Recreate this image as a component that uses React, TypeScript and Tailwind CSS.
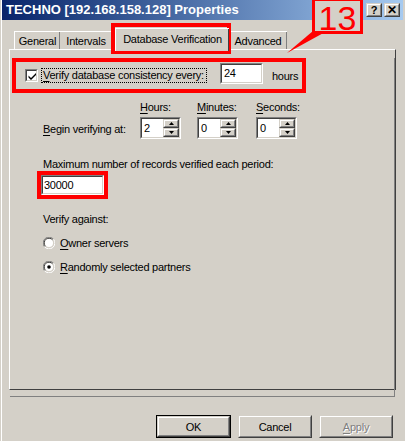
import React from "react";

const Sunken = ({ className = "", children }: { className?: string; children?: React.ReactNode }) => (
  <div className={"border border-t-[#808080] border-l-[#808080] border-b-white border-r-white " + className}>
    <div className="h-full w-full border border-t-[#404040] border-l-[#404040] border-b-[#d4d0c8] border-r-[#d4d0c8] bg-white">
      {children}
    </div>
  </div>
);

const Raised = ({ className = "", children }: { className?: string; children?: React.ReactNode }) => (
  <div className={"border border-t-[#d4d0c8] border-l-[#d4d0c8] border-b-[#404040] border-r-[#404040] " + className}>
    <div className="flex h-full w-full items-center justify-center border border-t-white border-l-white border-b-[#808080] border-r-[#808080] bg-[#d4d0c8]">
      {children}
    </div>
  </div>
);

const Arrow = ({ up }: { up?: boolean }) => (
  <svg width="5" height="3" viewBox="0 0 5 3">
    {up ? <polygon points="2.5,0 5,3 0,3" fill="#000" /> : <polygon points="0,0 5,0 2.5,3" fill="#000" />}
  </svg>
);

const Spinner = ({ value }: { value: string }) => (
  <Sunken className="h-[22px] w-[41px]">
    <div className="flex h-full">
      <div className="flex-1 pl-[2px] pt-[2px]">{value}</div>
      <div className="flex w-[16px] flex-col">
        <Raised className="h-[9px] w-full">
          <Arrow up />
        </Raised>
        <Raised className="h-[9px] w-full">
          <Arrow />
        </Raised>
      </div>
    </div>
  </Sunken>
);

const Radio = ({ checked }: { checked?: boolean }) => (
  <svg width="12" height="12" viewBox="0 0 12 12">
    <path d="M10.5 2.2 A5.6 5.6 0 0 0 1.5 9.8" stroke="#808080" strokeWidth="1" fill="none" />
    <path d="M9.5 2.8 A4.6 4.6 0 0 0 2.4 9.2" stroke="#404040" strokeWidth="1" fill="none" />
    <path d="M1.5 9.8 A5.6 5.6 0 0 0 10.5 2.2" stroke="#ffffff" strokeWidth="1" fill="none" />
    <circle cx="6" cy="6" r="4" fill="#fff" />
    {checked && <circle cx="6" cy="6" r="1.8" fill="#000" />}
  </svg>
);

const U = ({ children }: { children: React.ReactNode }) => <span className="underline underline-offset-[2px]">{children}</span>;

export default function App() {
  return (
    <div
      className="relative h-[441px] w-[405px] overflow-hidden bg-[#d4d0c8] text-[11px] leading-[14px] tracking-[-0.25px] text-black"
      style={{ fontFamily: '"Liberation Sans", Arial, sans-serif' }}
    >
      {/* window left highlight */}
      <div className="absolute left-[1px] top-0 h-full w-[1px] bg-white" />

      {/* title bar */}
      <div className="ml-[2px] mr-[2px] flex h-[20px] items-center bg-gradient-to-r from-[#0a246a] to-[#a6caf0] pl-[4px] pr-[3px]">
        <div className="flex-1 text-[13px] font-bold tracking-normal text-white">TECHNO [192.168.158.128] Properties</div>
        <Raised className="h-[14px] w-[16px]">
          <span className="text-[11px] font-bold leading-none">?</span>
        </Raised>
        <Raised className="ml-[2px] h-[14px] w-[16px]">
          <span className="text-[12px] font-bold leading-none">✕</span>
        </Raised>
      </div>

      {/* tabs */}
      <div className="ml-[14px] mt-[8px] flex h-[21px] items-end whitespace-nowrap">
        <div className="flex h-[18px] w-[46px] items-center justify-center border-l border-t border-white shadow-[inset_-1px_0_0_#808080]">
          General
        </div>
        <div className="flex h-[18px] w-[52px] items-center justify-center border-t border-white shadow-[inset_-1px_0_0_#808080]">
          Intervals
        </div>
        <div className="relative z-10 -mb-[2px] ml-[3px] flex h-[23px] w-[114px] items-start justify-center border-l border-t border-white bg-[#d4d0c8] pt-[3px] shadow-[inset_-1px_0_0_#404040]">
          Database Verification
        </div>
        <div className="flex h-[18px] w-[58px] items-center justify-center border-t border-white shadow-[inset_-1px_0_0_#808080]">
          Advanced
        </div>
      </div>

      {/* panel */}
      <div className="ml-[9px] h-[341px] w-[387px] border-l border-t border-white border-b border-r border-b-[#404040] border-r-[#404040]">
        <div className="h-full w-full border-b border-r border-b-[#808080] border-r-[#808080] whitespace-nowrap">
          {/* red row */}
          <div className="ml-[2px] mt-[8px] flex h-[35px] w-[294px] items-center border-[4px] border-[#ff0000] pl-[9px]">
            <Sunken className="h-[13px] w-[13px]">
              <svg width="11" height="11" viewBox="0 0 11 11">
                <path d="M1.5 4.5 L4 7 L9 2 L9 4 L4 9 L1.5 6.5 Z" fill="#000" />
              </svg>
            </Sunken>
            <div className="ml-[3px] w-[166px] border border-dotted border-black px-[1px] leading-[13px]">
              <U>V</U>erify database consistency every:
            </div>
            <Sunken className="-mt-[5px] ml-[13px] h-[21px] w-[43px]">
              <div className="pl-[2px] pt-[1px]">24</div>
            </Sunken>
            <span className="ml-[9px]">hours</span>
          </div>

          {/* begin verifying */}
          <div className="ml-[33px] mt-[7px] flex">
            <div className="mt-[22px] w-[97px]">
              <U>B</U>egin verifying at:
            </div>
            <div className="flex flex-col">
              <div>
                <U>H</U>ours:
              </div>
              <div className="mt-[3px]">
                <Spinner value="2" />
              </div>
            </div>
            <div className="ml-[16px] flex flex-col">
              <div>
                <U>M</U>inutes:
              </div>
              <div className="mt-[3px]">
                <Spinner value="0" />
              </div>
            </div>
            <div className="ml-[18px] flex flex-col">
              <div>
                <U>S</U>econds:
              </div>
              <div className="mt-[3px]">
                <Spinner value="0" />
              </div>
            </div>
          </div>

          <div className="ml-[33px] mt-[18px]">Maximum number of records verified each period:</div>
          <div className="ml-[27px] h-[28px] w-[71px] border-[4px] border-[#ff0000] bg-white">
            <Sunken className="h-full w-full">
              <div className="pl-[1px] pt-[1px]">30000</div>
            </Sunken>
          </div>

          <div className="ml-[33px] mt-[13px]">Verify against:</div>
          <div className="ml-[33px] mt-[10px] flex items-center">
            <Radio />
            <span className="ml-[5px]">
              <U>O</U>wner servers
            </span>
          </div>
          <div className="ml-[33px] mt-[10px] flex items-center">
            <Radio checked />
            <span className="ml-[5px]">
              <U>R</U>andomly selected partners
            </span>
          </div>
        </div>
      </div>

      {/* buttons */}
      <div className="mr-[12px] mt-[25px] flex justify-end gap-[7px]">
        <div className="h-[23px] w-[75px] border border-black">
          <Raised className="h-full w-full">OK</Raised>
        </div>
        <Raised className="h-[23px] w-[74px]">Cancel</Raised>
        <Raised className="h-[23px] w-[74px]">
          <span className="text-[#808080] [text-shadow:1px_1px_0_#fff]">
            <U>A</U>pply
          </span>
        </Raised>
      </div>

      {/* annotations */}
      <div className="absolute left-[111px] top-[23px] h-[31px] w-[120px] border-[4px] border-[#ff0000]" />
      <svg className="absolute left-0 top-0" width="405" height="60" viewBox="0 0 405 60">
        <polygon points="313,31 327,31 287,53" fill="#ff0000" />
      </svg>
      <div className="absolute left-[312px] top-[-2px] flex h-[36px] w-[51px] items-start justify-center border-[3px] border-[#ff0000] bg-[#d4d0c8] pt-[3px]">
        <span className="text-[34px] leading-[28px] tracking-normal text-[#ff0000]">13</span>
      </div>
    </div>
  );
}
